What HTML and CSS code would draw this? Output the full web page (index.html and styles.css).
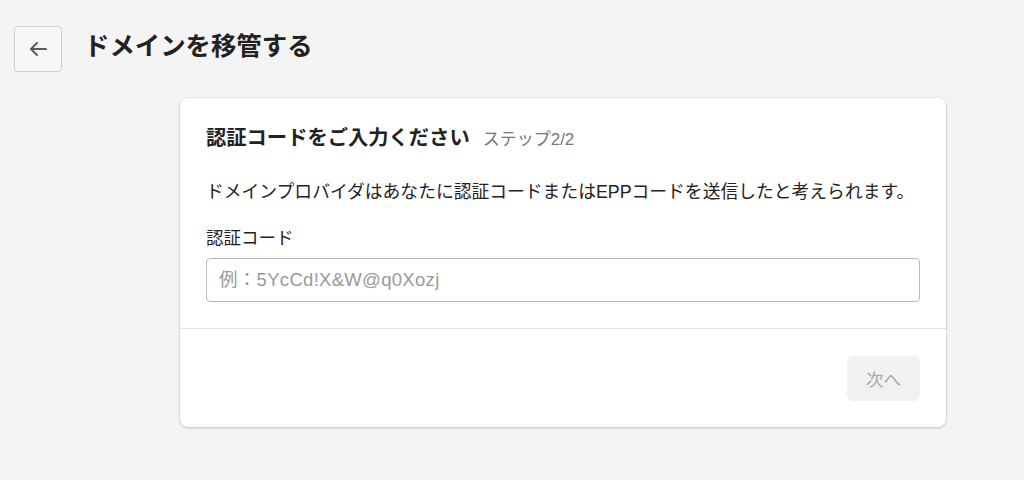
FILE: index.html
```html
<!DOCTYPE html>
<html lang="ja">
<head>
<meta charset="utf-8">
<link rel="stylesheet" href="styles.css">
</head>
<body>
<header class="page-header">
  <button class="back-btn" aria-label="戻る">
    <svg width="22" height="22" viewBox="0 0 22 22" fill="none" stroke="#5c5c5c" stroke-width="2" stroke-linecap="round" stroke-linejoin="round">
      <path d="M19 11H4"/>
      <path d="M10 5l-6 6 6 6"/>
    </svg>
  </button>
  <h1 class="page-title">ドメインを移管する</h1>
</header>
<main class="main">
  <section class="card">
    <div class="card-body">
      <h2 class="card-title">認証コードをご入力ください<span class="step">ステップ2/2</span></h2>
      <p class="desc">ドメインプロバイダはあなたに認証コードまたはEPPコードを送信したと考えられます。</p>
      <label class="label" for="code">認証コード</label>
      <input class="input" id="code" type="text" placeholder="例：5YcCd!X&amp;W@q0Xozj">
    </div>
    <div class="card-footer">
      <button class="next-btn" disabled>次へ</button>
    </div>
  </section>
</main>
</body>
</html>
```

FILE: styles.css
```css
* { box-sizing: border-box; }
html, body { margin: 0; padding: 0; }
body {
  background: #f4f4f4;
  font-family: "Liberation Sans", "Noto Sans CJK JP", sans-serif;
  color: #202020;
  width: 1024px;
  height: 480px;
  overflow: hidden;
}
.page-header {
  display: flex;
  align-items: center;
  gap: 22px;
  padding: 26px 14px 0;
  height: 72px;
}
.back-btn {
  width: 48px;
  height: 46px;
  border: 1px solid #cfcfcf;
  border-radius: 4px;
  background: #f6f6f6;
  display: flex;
  align-items: center;
  justify-content: center;
  padding: 0;
}
.page-title {
  margin: 0;
  font-size: 25.4px;
  font-weight: 700;
  color: #222;
  line-height: 1;
  position: relative;
  top: -2px;
}
.main {
  padding: 26px 0 0 180px;
}
.card {
  width: 766px;
  background: #fff;
  border-radius: 8px;
  box-shadow: 0 0 0 1px rgba(0,0,0,0.04), 0 1px 3px rgba(0,0,0,0.18);
}
.card-body {
  padding: 26px 26px 26px;
  display: flex;
  flex-direction: column;
}
.card-title {
  margin: 0;
  font-size: 20.3px;
  line-height: 28px;
  font-weight: 700;
  color: #222;
  display: flex;
  align-items: baseline;
  gap: 13px;
}
.step {
  font-size: 17px;
  font-weight: 400;
  color: #777;
}
.desc {
  margin: 25px 0 0;
  font-size: 17.8px;
  line-height: 26px;
  color: #222;
}
.label {
  margin-top: 21px;
  font-size: 17.5px;
  line-height: 24px;
  color: #222;
}
.input {
  margin-top: 8px;
  height: 44px;
  width: 100%;
  border: 1px solid #b8b8b8;
  border-radius: 4px;
  padding: 0 12px;
  font-family: "Liberation Sans", "Noto Sans CJK JP", sans-serif;
  font-size: 18.5px;
  letter-spacing: 0.3px;
  color: #222;
  background: #fff;
}
.input::placeholder { color: #9a9a9a; }
.card-footer {
  border-top: 1px solid #e3e3e3;
  padding: 27px 26px 26px;
  display: flex;
  justify-content: flex-end;
}
.next-btn {
  width: 73px;
  height: 45px;
  border: none;
  border-radius: 6px;
  background: #f1f1f1;
  color: #a8a8a8;
  font-family: "Liberation Sans", "Noto Sans CJK JP", sans-serif;
  font-size: 17.5px;
}
```
